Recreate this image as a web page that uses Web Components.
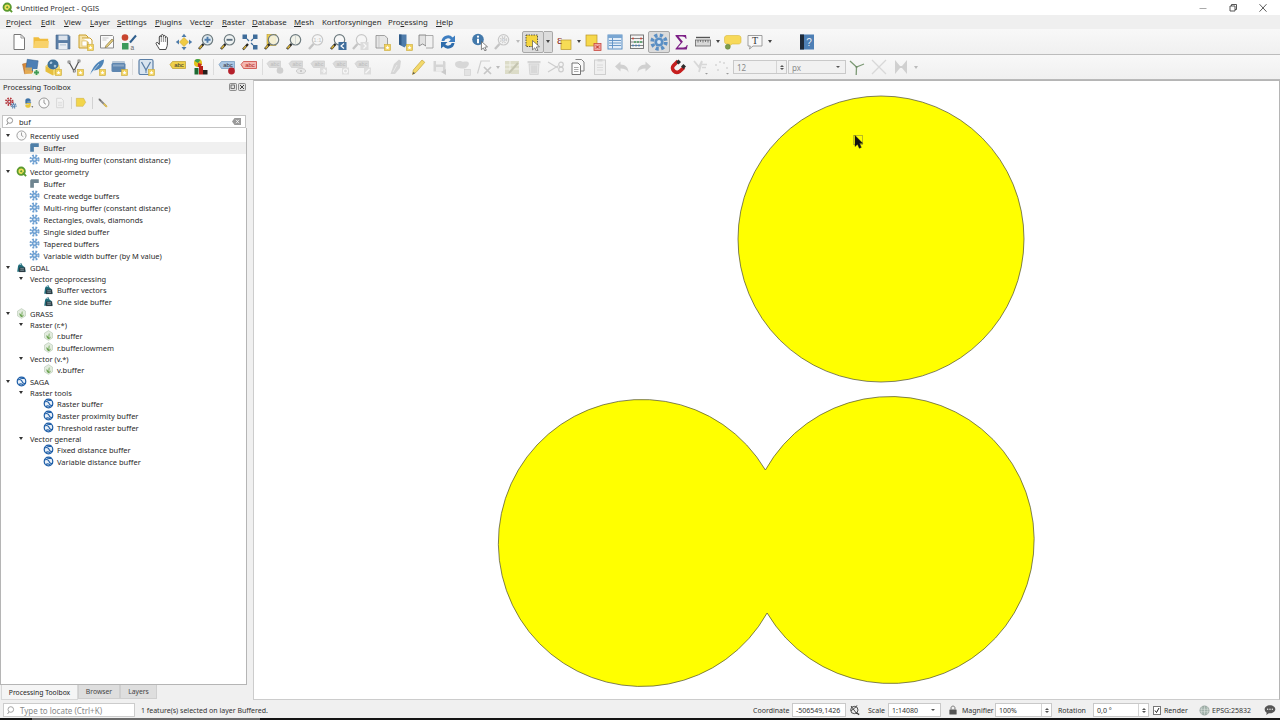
<!DOCTYPE html>
<html lang="en">

<head>
  <meta charset="UTF-8">
  <title>*Untitled Project - QGIS</title>
  <style>
    html, body {
      margin: 0;
      width: 1280px;
      height: 720px;
      overflow: hidden;
      background: #f0f0f0;
      color: #222;
      font-family: "Noto Sans", "Liberation Sans", sans-serif;
      font-size: 8px;
    }
    body { display: flex; flex-direction: column; }
    .main { flex: 1; display: flex; min-height: 0; }
  </style>
</head>

<body>
  <qg-titlebar></qg-titlebar>
  <qg-menubar></qg-menubar>

  <qg-toolbar style="--pad:8px;height:26px">
    <qg-tool name="newdoc"></qg-tool><qg-tool name="open"></qg-tool><qg-tool name="save"></qg-tool><qg-tool name="saveas"></qg-tool><qg-tool name="layout"></qg-tool><qg-tool name="styles"></qg-tool>
    <qg-grip w="11"></qg-grip>
    <qg-tool name="pan"></qg-tool><qg-tool name="panto"></qg-tool><qg-tool name="zoomin"></qg-tool><qg-tool name="zoomout"></qg-tool><qg-tool name="zoomfull"></qg-tool><qg-tool name="zoomlayer"></qg-tool><qg-tool name="zoomsel"></qg-tool><qg-tool name="native" off></qg-tool><qg-tool name="zoomlast"></qg-tool><qg-tool name="zoomnext" off></qg-tool><qg-tool name="newmap"></qg-tool><qg-tool name="newmark"></qg-tool><qg-tool name="showmark"></qg-tool><qg-tool name="refresh"></qg-tool>
    <qg-grip w="10"></qg-grip>
    <qg-tool name="identify"></qg-tool><qg-tool name="lensgear" off></qg-tool><qg-drop w="9" off></qg-drop>
    <qg-tool name="select" on></qg-tool><qg-drop w="9" on></qg-drop>
    <qg-tool name="expr"></qg-tool><qg-drop w="7"></qg-drop>
    <qg-tool name="deselect"></qg-tool><qg-tool name="table"></qg-tool><qg-tool name="abacus"></qg-tool><qg-tool name="gear" on></qg-tool><qg-tool name="sigma"></qg-tool><qg-tool name="ruler"></qg-tool><qg-drop w="8"></qg-drop>
    <qg-tool name="tip"></qg-tool><qg-tool name="annot"></qg-tool><qg-drop w="8"></qg-drop>
    <qg-grip w="22"></qg-grip>
    <qg-tool name="help"></qg-tool>
  </qg-toolbar>

  <qg-toolbar style="--pad:20px;height:25px;--line:#b9b9b9">
    <qg-tool name="dsm"></qg-tool><qg-tool name="gpkg"></qg-tool><qg-tool name="vstar"></qg-tool><qg-tool name="feather"></qg-tool><qg-tool name="virtual"></qg-tool>
    <qg-grip w="5" sep></qg-grip>
    <qg-tool name="vframe"></qg-tool>
    <qg-grip w="10"></qg-grip>
    <qg-tool name="label"></qg-tool><qg-tool name="pies"></qg-tool>
    <qg-grip w="5" sep></qg-grip>
    <qg-tool name="labelpin"></qg-tool><qg-tool name="labelred"></qg-tool>
    <qg-grip w="4" sep></qg-grip>
    <qg-tool name="lab1" off></qg-tool><qg-tool name="lab2" off></qg-tool><qg-tool name="lab3" off></qg-tool><qg-tool name="lab4" off></qg-tool><qg-tool name="lab5" off></qg-tool>
    <qg-grip w="11"></qg-grip>
    <qg-tool name="pencilgrey" off></qg-tool><qg-tool name="pencil"></qg-tool><qg-tool name="saveedit" off></qg-tool><qg-tool name="blob" off></qg-tool><qg-tool name="editx" off></qg-tool><qg-drop w="6" off></qg-drop>
    <qg-tool name="tablepen" off></qg-tool><qg-tool name="trash" off></qg-tool><qg-tool name="scissors" off></qg-tool><qg-tool name="copy"></qg-tool><qg-tool name="paste" off></qg-tool><qg-tool name="undo" off></qg-tool><qg-tool name="redo" off></qg-tool>
    <qg-grip w="12"></qg-grip>
    <qg-tool name="magnet"></qg-tool><qg-tool name="node" off></qg-tool><qg-tool name="dots" off></qg-tool>
    <qg-field w="54" value="12" spin off></qg-field>
    <qg-field w="58" value="px" drop off style="margin-left:1px"></qg-field>
    <qg-tool name="ysplit"></qg-tool><qg-tool name="xgrey" off></qg-tool><qg-tool name="xsolid" off></qg-tool><qg-drop w="7" off></qg-drop>
  </qg-toolbar>

  <div class="main">
    <qg-toolbox>
      <qg-row depth="0" open icon="clock" label="Recently used"></qg-row>
      <qg-row depth="1" icon="buffer" label="Buffer" hot></qg-row>
      <qg-row depth="1" icon="algo" label="Multi-ring buffer (constant distance)"></qg-row>
      <qg-row depth="0" open icon="qgis" label="Vector geometry"></qg-row>
      <qg-row depth="1" icon="buffer2" label="Buffer"></qg-row>
      <qg-row depth="1" icon="algo" label="Create wedge buffers"></qg-row>
      <qg-row depth="1" icon="algo" label="Multi-ring buffer (constant distance)"></qg-row>
      <qg-row depth="1" icon="algo" label="Rectangles, ovals, diamonds"></qg-row>
      <qg-row depth="1" icon="algo" label="Single sided buffer"></qg-row>
      <qg-row depth="1" icon="algo" label="Tapered buffers"></qg-row>
      <qg-row depth="1" icon="algo" label="Variable width buffer (by M value)"></qg-row>
      <qg-row depth="0" open icon="gdal" label="GDAL"></qg-row>
      <qg-row depth="1" open label="Vector geoprocessing"></qg-row>
      <qg-row depth="2" icon="gdal" label="Buffer vectors"></qg-row>
      <qg-row depth="2" icon="gdal" label="One side buffer"></qg-row>
      <qg-row depth="0" open icon="grass" label="GRASS"></qg-row>
      <qg-row depth="1" open label="Raster (r.*)"></qg-row>
      <qg-row depth="2" icon="grass" label="r.buffer"></qg-row>
      <qg-row depth="2" icon="grass" label="r.buffer.lowmem"></qg-row>
      <qg-row depth="1" open label="Vector (v.*)"></qg-row>
      <qg-row depth="2" icon="grass" label="v.buffer"></qg-row>
      <qg-row depth="0" open icon="saga" label="SAGA"></qg-row>
      <qg-row depth="1" open label="Raster tools"></qg-row>
      <qg-row depth="2" icon="saga" label="Raster buffer"></qg-row>
      <qg-row depth="2" icon="saga" label="Raster proximity buffer"></qg-row>
      <qg-row depth="2" icon="saga" label="Threshold raster buffer"></qg-row>
      <qg-row depth="1" open label="Vector general"></qg-row>
      <qg-row depth="2" icon="saga" label="Fixed distance buffer"></qg-row>
      <qg-row depth="2" icon="saga" label="Variable distance buffer"></qg-row>
    </qg-toolbox>
    <qg-map></qg-map>
  </div>

  <qg-statusbar></qg-statusbar>

  <script>
    // small pieces the toolbar icons share
    const badge = '<rect x="11.5" y="11.5" width="6" height="6" fill="#f3d35f" stroke="#c8a838" stroke-width=".6"/><path d="M14.5 12.5l.6 1.4 1.4.1-1.1 1 .4 1.5-1.3-.8-1.3.8.4-1.5-1.1-1 1.4-.1z" fill="#fff"/>';
    const gearAt = (x, y, r, c) => `<circle cx="${x}" cy="${y}" r="${r}" fill="none" stroke="${c}" stroke-width="${r * .55}" stroke-dasharray="${r * .45} ${r * .35}"/><circle cx="${x}" cy="${y}" r="${r * .68}" fill="${c}"/><circle cx="${x}" cy="${y}" r="${r * .28}" fill="#dfeaf6"/>`;
    const lens = (inner = '', fill = '#f1f5f4') => `<path d="M6.5 11L2 16" stroke="#222" stroke-width="2.6"/><path d="M5 12.5L2.5 15.5" stroke="#d8b23a" stroke-width="1.6"/><circle cx="10.5" cy="6.8" r="5.2" fill="${fill}" stroke="#6f7c80" stroke-width="1.2"/>${inner}`;
    const pale = (inner = '') => `<path d="M6.5 11L2 16" stroke="#c4c4c4" stroke-width="2.4"/><circle cx="10.5" cy="6.8" r="5.2" fill="#f6f6f6" stroke="#c8c8c8" stroke-width="1.2"/>${inner}`;
    const abc = (f, s, c) => `<path d="M1 6.5L3.5 3.5H16.5V10.5H3.5z" fill="${f}" stroke="${s}" stroke-width=".7"/><text x="10" y="9.2" font-size="6" font-family="Liberation Sans" text-anchor="middle" fill="${c}">abc</text>`;
    const greyAbc = extra => `<path d="M1 5.5L3.5 3H14.5V9.5H3.5z" fill="#dadada" stroke="#cfcfcf" stroke-width=".7"/><text x="9" y="8" font-size="5.5" font-family="Liberation Sans" text-anchor="middle" fill="#bbb">abc</text>${extra}`;

    const ICONS = {
      newdoc: '<path d="M4 1.5h7l3.5 3.5v11.5H4z" fill="#fff" stroke="#777"/><path d="M11 1.5V5h3.5" fill="none" stroke="#999"/>',
      open: '<path d="M1.5 15V4.2h5l1.5 1.6h8.2V15z" fill="#f0bd3e"/><path d="M1.5 15l1.4-7h14L16 15z" fill="#f8d26a"/>',
      save: '<path d="M2 2h12.5L16 3.5V16H2z" fill="#5a7ea6" stroke="#47658a" stroke-width=".6"/><rect x="4.5" y="2.5" width="9" height="4.6" fill="#dce3ec"/><rect x="4.5" y="10" width="9" height="6" fill="#e9eef4"/><rect x="6" y="11.5" width="6" height=".8" fill="#9fb3c9"/>',
      saveas: '<path d="M3 2h7l2 2v11H3z" fill="#f5e2a8" stroke="#c99e2b"/><path d="M6 5h8l2 2v4" fill="#fff" stroke="#c99e2b"/><rect x="6" y="8" width="5" height="5" fill="#fff" stroke="#d7b65a" stroke-width=".6"/>' + badge,
      layout: '<path d="M2.5 2.5h12l1 1v11.5h-13z" fill="#fafafa" stroke="#8b8b8b"/><path d="M4.5 5h6M4.5 7h4" stroke="#bbb" stroke-width=".8"/><path d="M14 6l-6 6.5-1 2.2 2.3-.8 6-6.4z" fill="#e5cd7c" stroke="#7a6b3a" stroke-width=".6"/>',
      styles: '<circle cx="5" cy="4.5" r="3.3" fill="#c8452f"/><rect x="2" y="10" width="6.5" height="6.5" fill="#3c9a5b"/><path d="M10 9.5L16 2.5" stroke="#2f5f8e" stroke-width="2"/><text x="10.5" y="16.5" font-size="6.5" font-family="Liberation Sans" fill="#666">a</text>',
      pan: '<g transform="translate(1 0)"><path d="M5.5 16.5c-.7-1.6-3-4.6-3.4-5.8-.4-1.2 1-1.8 1.9-.8l1.3 1.6V4c0-1.5 2-1.5 2 0V2.6c0-1.5 2.1-1.5 2.1 0V3.5c0-1.4 2-1.4 2 0v1.2c0-1.2 2-1.2 2 .2v6c0 2.3-.8 3.4-1.5 5.6z" fill="#fff" stroke="#333" stroke-width=".9"/><path d="M7.3 4v5M9.4 3.5V9M11.4 4.5V9" stroke="#444" stroke-width=".6"/></g>',
      panto: '<path d="M9 4.5L13.5 9 9 13.5 4.5 9z" fill="#f0cb45" stroke="#c7a42f" stroke-width=".6"/><path d="M9 .8L11.5 4h-5zM9 17.2L6.5 14h5zM.8 9L4 6.5v5zM17.2 9L14 11.5v-5z" fill="#4f7cab"/>',
      zoomin: lens('<path d="M10.5 3.8v6M7.5 6.8h6" stroke="#4f7cab" stroke-width="1.9"/>', '#dfe9ee'),
      zoomout: lens('<path d="M7.5 6.8h6" stroke="#5c6f7e" stroke-width="1.9"/>', '#eef2f2'),
      zoomfull: '<rect x="1.5" y="1.5" width="4.5" height="4.5" fill="#3f6d9b"/><rect x="12" y="1.5" width="4.5" height="4.5" fill="#3f6d9b"/><rect x="12" y="12" width="4.5" height="4.5" fill="#3f6d9b"/><path d="M6 6l2 2M12 6l-2 2M12 12l-2-2" stroke="#3f6d9b" stroke-width="1.2"/><path d="M7 11L2 16.5" stroke="#222" stroke-width="2.2"/><path d="M5 13l-2.5 3" stroke="#d8b23a" stroke-width="1.3"/>',
      zoomlayer: '<rect x="4" y="1.5" width="9" height="11" fill="#f0cf4d" stroke="#b99a2e" stroke-width=".6"/>' + lens('', 'rgba(245,245,235,.85)'),
      zoomsel: lens('<path d="M10.5 2v9.5" stroke="#c9cfcf" stroke-width=".8"/>', '#f2f3ea'),
      native: pale('<text x="10.5" y="9" font-size="6" font-family="Liberation Sans" text-anchor="middle" fill="#c4c4c4">1:1</text>'),
      zoomlast: lens('', '#f8f8f8') + '<rect x="9.5" y="9" width="8" height="8" fill="#3f6d9b"/><path d="M15 10.5L12 13l3 2.5" fill="none" stroke="#fff" stroke-width="1.2"/>',
      zoomnext: pale('<rect x="9.5" y="9" width="8" height="8" fill="#dcdcdc"/><path d="M12.5 10.5L15 13l-2.5 2.5" fill="none" stroke="#f8f8f8" stroke-width="1.2"/>'),
      newmap: '<path d="M3 2.5h8.5l3 2.5v10H3z" fill="#e6e6e6" stroke="#8c8c8c" stroke-width=".8"/><path d="M6 2.5V15" stroke="#bbb" stroke-width=".7"/>' + badge,
      newmark: '<path d="M4 1.5h7.5V12l-2 2.5-5.500-3z" fill="#4f7cab"/><path d="M4 1.5h2.500v11L4 11.5z" fill="#2f5a88"/>' + badge,
      showmark: '<path d="M2 2h7v11l-3.500-2L2 13z" fill="#e2e2e2" stroke="#777" stroke-width=".8"/><path d="M9 2.500h7V15H9" fill="#f1f1f1" stroke="#999" stroke-width=".8"/>',
      refresh: '<path d="M2.500 8a6.500 6.500 0 0 1 11.200-3.600L16 2.500V9h-6.500l2.300-2.300A3.800 3.800 0 0 0 5.300 8z" fill="#3f7fc1"/><path d="M15.500 10a6.500 6.500 0 0 1-11.200 3.600L2 15.500V9h6.500l-2.300 2.300a3.800 3.800 0 0 0 6.500-1.300z" fill="#2e6cab"/>',
      identify: '<circle cx="7" cy="6.500" r="5.800" fill="#4379ab"/><circle cx="7" cy="3.700" r="1.100" fill="#fff"/><path d="M6 5.800h2v4.500H6z" fill="#fff"/><path d="M10.500 8.500l6 5.300-2.700.4 1.500 3-1.500.7-1.400-3-2 1.800z" fill="#fff" stroke="#555" stroke-width=".7"/>',
      lensgear: pale(gearAt(10.5, 6.8, 3, '#cfcfcf')),
      select: '<rect x="2" y="2" width="11.500" height="11.500" fill="#f5d53f" stroke="#333" stroke-width=".8" stroke-dasharray="1.500 1"/><path d="M8.500 7.500l7 6.200-3.200.4 1.700 3.300-1.500.7-1.700-3.300-2.300 2.100z" fill="#fff" stroke="#555" stroke-width=".7"/>',
      expr: '<rect x="6" y="7" width="10" height="9.500" fill="#f7dc55" stroke="#b7952c" stroke-width=".7"/><text x="2" y="11" font-size="12" font-family="Liberation Serif" fill="#8e2b20">ε</text>',
      deselect: '<rect x="2" y="2" width="11" height="11" fill="#f6d84b" stroke="#b7952c" stroke-width=".7"/><rect x="10" y="10.500" width="7" height="7" fill="#eea6a0" stroke="#c9483f" stroke-width=".8"/><path d="M12 12.500l3 3M15 12.500l-3 3" stroke="#c2261e" stroke-width="1"/>',
      table: '<rect x="2" y="2" width="14" height="14" fill="#e4eef8" stroke="#5b8fc4"/><rect x="2" y="2" width="14" height="3" fill="#7aa6d2"/><path d="M3 7.500h12M3 10h12M3 12.500h12M6.500 5v10.500" stroke="#5b8fc4" stroke-width=".9"/>',
      abacus: '<rect x="2.500" y="2" width="13" height="13.500" fill="#f4f4f4" stroke="#6b6b6b" stroke-width=".9"/><path d="M2.500 5.500h13M2.500 9h13M2.500 12.500h13" stroke="#666" stroke-width=".8"/><g fill="#c44a3b"><circle cx="5" cy="5.500" r="1"/><circle cx="13" cy="5.500" r="1"/></g><g fill="#4c9e62"><circle cx="7" cy="9" r="1"/><circle cx="10" cy="9" r="1"/><circle cx="13" cy="9" r="1"/></g><g fill="#4f7cab"><circle cx="5" cy="12.500" r="1"/><circle cx="8" cy="12.500" r="1"/><circle cx="11" cy="12.500" r="1"/></g>',
      gear: gearAt(9, 9, 6.8, '#5b8fc4'),
      sigma: '<path d="M3.500 2h10.500l.6 3.800h-.9c-.5-1.500-1.300-2.300-3.500-2.300H6.500l4.400 5.300-5 5.800h5.300c2 0 3-.7 3.600-2.500h.9l-.9 4.400H3.500v-.8l5.200-6.200-5.200-6.600z" fill="#7d1f86"/>',
      ruler: '<path d="M2 4.500h14" stroke="#555" stroke-width="1.400"/><rect x="1.500" y="7" width="15" height="6" fill="#d8d8d8" stroke="#666" stroke-width=".8"/><path d="M4 7v2.500M6.500 7v2M9 7v2.500M11.500 7v2M14 7v2.500" stroke="#555" stroke-width=".7"/>',
      tip: '<path d="M3 2.500h11.500c1.500 0 2.500 1 2.500 2.500v3.500c0 1.500-1 2.500-2.500 2.500H8l-3 2.500.5-2.500H3c-1.500 0-2.500-1-2.500-2.500V5c0-1.500 1-2.500 2.500-2.500z" fill="#f7d959" stroke="#d8b83d" stroke-width=".6"/><circle cx="3.800" cy="13.800" r="2.500" fill="#7c9c4a" stroke="#5a7a30" stroke-width=".5"/>',
      annot: '<path d="M2 2.500h14V13H7l-3.500 3 .8-3H2z" fill="#f8f8f8" stroke="#888" stroke-width=".8"/><text x="9" y="11" font-size="10" font-family="Liberation Serif" text-anchor="middle" fill="#333">T</text>',
      help: '<rect x="2" y="1.500" width="14" height="15" fill="#4d7fb5"/><rect x="2" y="1.500" width="4" height="15" fill="#1f2a38"/><text x="11" y="12.500" font-size="10" font-family="Liberation Sans" text-anchor="middle" fill="#e8eef5">?</text>',
      dsm: '<rect x="1.500" y="5" width="10" height="10" transform="rotate(-12 6 10)" fill="#d98a3a" stroke="#a9651f" stroke-width=".5"/><rect x="4.500" y="2" width="11" height="10.500" transform="rotate(8 10 7)" fill="#4c7fb5" stroke="#37618c" stroke-width=".5"/><rect x="3" y="9.500" width="7" height="6.500" fill="#e8b45b" opacity=".8"/><rect x="11" y="11" width="7" height="7" fill="#e9f2e4"/><path d="M14.500 12v5M12 14.500h5" stroke="#3f9b54" stroke-width="1.800"/>',
      gpkg: '<path d="M1.500 8l7.500 4v5.500l-7.500-4z" fill="#e6bf3e"/><path d="M9 12l7-3.500v5.500L9 17.500z" fill="#f3d769"/><path d="M1.500 8L9 3l7 5-7 4z" fill="#f0ce55"/><ellipse cx="9" cy="6.500" rx="5.500" ry="5" fill="#3f7198"/><path d="M6 4c2-1.500 3 .5 2 1.500S5 6.500 6 4zM10 7c2-.5 3 .5 2 2s-3 0-2-2z" fill="#a9c6dc"/>' + badge,
      vstar: '<path d="M3 4l5 9 5-10" fill="none" stroke="#555" stroke-width="1.200"/><rect x="2" y="3" width="2" height="2" fill="#fff" stroke="#444" stroke-width=".6"/><rect x="12" y="2" width="2" height="2" fill="#fff" stroke="#444" stroke-width=".6"/><rect x="7.200" y="12" width="2" height="2" fill="#fff" stroke="#444" stroke-width=".6"/>' + badge,
      feather: '<path d="M2 16.500C5 9 9 3 16 1.500c0 5-3 9-7 10.500l-3.500.6z" fill="#4f85b8"/><path d="M2 16.500L11 6" stroke="#dce8f2" stroke-width=".7"/>' + badge,
      virtual: '<rect x="2" y="3" width="13" height="3" rx="1" fill="#b8c7d6"/><rect x="1.500" y="5" width="14" height="9" rx="1.500" fill="#5e86b0"/><rect x="3" y="6.500" width="11" height="2" fill="#8aa7c5"/>' + badge,
      vframe: '<rect x="2" y="1.500" width="14" height="15" rx="1.500" fill="#d8e4ef" stroke="#5b7fa6" stroke-width="1.200"/><path d="M4.500 4l4.500 8 4.500-8" fill="none" stroke="#5b7fa6" stroke-width="1.300"/><path d="M9 12v3" stroke="#5b7fa6"/>' + badge,
      label: abc('#efd04a', '#b99a2e', '#333'),
      pies: '<circle cx="7" cy="5" r="4" fill="#e3c21b"/><path d="M7 5L3.500 3a4 4 0 0 1 6-1z" fill="#3fa14f"/><path d="M7 5l3.800 1a4 4 0 0 1-4 3z" fill="#c42a20"/><rect x="8" y="8" width="4" height="8.500" fill="#b7211b"/><rect x="3.500" y="10" width="4" height="6.500" fill="#1c6a32"/><rect x="12" y="12" width="4.500" height="4.500" fill="#23201c"/>',
      labelpin: abc('#a9c6e3', '#6f95bb', '#334') + '<circle cx="13.500" cy="13" r="3.400" fill="#b5202b"/>',
      labelred: abc('#f3b6b0', '#c5302a', '#b3231d'),
      lab1: greyAbc('<circle cx="14" cy="12.500" r="3.300" fill="#cfcfcf"/>'),
      lab2: greyAbc('<ellipse cx="13" cy="13" rx="4.500" ry="2.500" fill="#e8e8e8" stroke="#bdbdbd" stroke-width=".7"/><circle cx="13" cy="13" r="1.100" fill="#c0c0c0"/>'),
      lab3: greyAbc('<rect x="10" y="9.500" width="7" height="7" fill="#ddd"/><path d="M11.500 13h3M13.500 11l2 2-2 2" fill="none" stroke="#f8f8f8" stroke-width="1.100"/>'),
      lab4: greyAbc('<rect x="10" y="9.500" width="7" height="7" fill="#ddd"/><circle cx="13.500" cy="13" r="2" fill="none" stroke="#f8f8f8" stroke-width="1.100"/>'),
      lab5: greyAbc('<rect x="10" y="9.500" width="7" height="7" fill="#ddd"/><path d="M11.500 15l4-4" stroke="#f8f8f8" stroke-width="1.200"/>'),
      pencilgrey: '<path d="M3.500 16L7 6l5-4.500 2 1.500-1 7-5 6z" fill="#d6d6d6"/><path d="M6 14l4-7" stroke="#f2f2f2" stroke-width=".7"/>',
      pencil: '<path d="M3.500 16.500l.8-4.500L13 2l2.800 2.300-8.700 10z" fill="#f3d96b" stroke="#c4a63d" stroke-width=".7"/><path d="M3.500 16.500l.8-2.500 1.800 1.300z" fill="#555"/>',
      saveedit: '<path d="M2.500 3h11l1 1v9.500h-12z" fill="#d5d5d5"/><rect x="5" y="3" width="7" height="3.500" fill="#f2f2f2"/><rect x="5" y="9" width="7" height="4.500" fill="#ececec"/><path d="M10 14l5-3v6z" fill="#cacaca"/>',
      blob: '<path d="M2 6c0-3 5-3.500 7-2.500s5-1 6.500 1S14 10 11 10.500 2 10 2 6z" fill="#d7d7d7"/><rect x="11.500" y="11.500" width="6" height="6" fill="#e3e3e3" stroke="#cdcdcd" stroke-width=".6"/>',
      editx: '<path d="M2.500 15.500L6 3h9" fill="none" stroke="#cfcfcf" stroke-width="1.200"/><path d="M9 9l7 7M16 9l-7 7" stroke="#c6c6c6" stroke-width="1.700"/>',
      tablepen: '<rect x="2" y="3" width="14" height="13" fill="#dcdcc8"/><path d="M2 7h14M2 11h14M7 3v13" stroke="#f3f3ec" stroke-width=".9"/><path d="M6 15L15 5" stroke="#c4c4b0" stroke-width="2"/>',
      trash: '<rect x="2.500" y="3" width="13" height="2.300" fill="#d5d5d5"/><path d="M4 6h10l-.8 10.500H4.800z" fill="#e3e3e3" stroke="#cdcdcd" stroke-width=".7"/><path d="M7 7.500V15M9 7.500V15M11 7.500V15" stroke="#c9c9c9" stroke-width=".8"/>',
      scissors: '<path d="M1 4l10 6M1 14l10-6" stroke="#cdcdcd" stroke-width="1.200"/><circle cx="14" cy="6.500" r="2.300" fill="none" stroke="#cdcdcd" stroke-width="1.200"/><circle cx="14" cy="11.500" r="2.300" fill="none" stroke="#cdcdcd" stroke-width="1.200"/>',
      copy: '<path d="M6.500 1.500h6l2.500 2.500v9h-3" fill="#f7f7f7" stroke="#777" stroke-width=".9"/><path d="M3 5h6l2.500 2.500v9H3z" fill="#fcfcfc" stroke="#666" stroke-width=".9"/><path d="M5 9.500h4.500M5 11.500h4.500M5 13.500h4.500" stroke="#888" stroke-width=".7"/>',
      paste: '<rect x="3.500" y="2" width="11" height="14.500" fill="#efefef" stroke="#cfcfcf"/><rect x="6.500" y="1" width="5" height="2.500" fill="#d5d5d5"/><path d="M6 7h6M6 9.500h6M6 12h6" stroke="#d5d5d5" stroke-width=".8"/>',
      undo: '<path d="M2 8.500L7.500 3.500v3c5 0 8 3 8 8-1.500-3-4-4-8-4v3z" fill="#d0d0d0"/>',
      redo: '<path d="M16 8.500L10.500 3.500v3c-5 0-8 3-8 8 1.500-3 4-4 8-4v3z" fill="#d0d0d0"/>',
      magnet: '<path d="M9 3L4.500 7.500C1.500 10.500 6 16.500 10.500 13.500L15 9.500" fill="none" stroke="#c61f1f" stroke-width="3.600"/><path d="M9.500 1.500L7 4l2.500 2.500L12 4zM17 8.500l-2.500-2.500L12 8.500l2.500 2.500z" fill="#2e2e2e"/>',
      node: '<path d="M3 3l5 6 3-6M11 3l-3 11" fill="none" stroke="#d8d8d8" stroke-width="1.800"/><path d="M11 6.500h5M11 9.500h4" stroke="#d8d8d8" stroke-width="1.500"/><path d="M14 15h3l-1.500 1.500z" fill="#999"/>',
      dots: '<g fill="#d6d6d6"><circle cx="3" cy="7" r="1"/><circle cx="7" cy="4" r="1"/><circle cx="11" cy="5" r="1"/><circle cx="14" cy="10" r="1"/><circle cx="5" cy="12" r="1"/></g><path d="M13 15h3l-1.500 1.500z" fill="#999"/>',
      ysplit: '<path d="M2 3l6.500 6L16 6M8.500 9l-.3 8" fill="none" stroke="#7d9a76" stroke-width="1.300"/><circle cx="8.500" cy="9" r="1" fill="#6d8a66"/>',
      xgrey: '<path d="M2 2l14 14M16 2L2 16" stroke="#d8d8d8" stroke-width="1.300"/>',
      xsolid: '<path d="M3 2l5 6h2l5-6v14l-5-6H8l-5 6z" fill="#d0d0d0"/>',
      // tree icons
      clock: '<circle cx="9" cy="9" r="7.500" fill="#fafafa" stroke="#8a8a8a" stroke-width="1.300"/><path d="M9 4v5l3 2" fill="none" stroke="#8a8a8a" stroke-width="1.300"/>',
      buffer: '<path d="M2 16V5c0-2 1-3 3-3h11v6H8v8z" fill="#4f7fa8"/>',
      buffer2: '<path d="M2 16V5c0-2 1-3 3-3h11v6H8v8z" fill="#6f8590"/>',
      algo: gearAt(9, 9, 6.5, '#6ea0d2'),
      qgis: '<circle cx="8.500" cy="8.500" r="6" fill="#f1e15a" stroke="#5a9a2f" stroke-width="3"/><path d="M11 11l5.500 5.500" stroke="#5a9a2f" stroke-width="3"/><rect x="7" y="7" width="3" height="3" fill="#5a9a2f" transform="rotate(45 8.500 8.500)"/>',
      gdal: '<path d="M3 9c0-3 2-7 6-7 1.500 3 1 4 5 6l2 8H2z" fill="#1f6b78"/><rect x="5" y="9" width="10" height="7.500" fill="#2c3c44"/><path d="M7 11h6M7 13.500h6" stroke="#a9c6cc" stroke-width="1"/><path d="M4 4l4-1.500 1 3z" fill="#9ccbd6"/>',
      grass: '<path d="M9 1l6.500 4v8L9 17l-6.500-4V5z" fill="#e3ecdf" stroke="#a9bda4" stroke-width=".8"/><path d="M9 15c-3-2-4-5-3-7 1 1 2 2 3 4 0-3 0-5 1-7 1 2 1 5-.5 8 1-1 2-2 3-2.500 0 2-1 4-3.500 4.500z" fill="#6da452"/>',
      saga: '<circle cx="9" cy="9" r="7" fill="#e9f0f8" stroke="#1f5fa8" stroke-width="2"/><path d="M2.500 6.500C6 5 9 6 10 9s3.500 4 6 2.500M4.500 14c3-2 5-2 8 1M6 3c2 1 5 1 8 .5" fill="none" stroke="#1f5fa8" stroke-width="1.800"/>',
      // status bar and panel bar
      pgears: gearAt(6.5, 7, 5, '#b3353b') + gearAt(13, 13, 3.5, '#4f7cab'),
      python: '<path d="M5 9V5c0-2 2-3 4-3s4 1 4 3v2H8v1h6c-1 2-2 3-4 3H6z" fill="#3f73a6"/><path d="M13 9v4c0 2-2 3-4 3s-4-1-4-3v-1h5v-1H4c1-1 3-2 5-2z" fill="#e8c63a"/><path d="M14 14h3l-1.500 2z" fill="#555"/>',
      pagegrey: '<path d="M4 2h7l3 3v11H4z" fill="#f4f4f4" stroke="#c8c8c8"/><path d="M6 8h6M6 10.500h6M6 13h6" stroke="#d0d0d0" stroke-width=".9"/>',
      tagyellow: '<path d="M2 2h11l3 6-4 6H2z" fill="#f2d54b" stroke="#c9a93a" stroke-width=".7"/>',
      wrench: '<path d="M3 3l11 11" stroke="#888" stroke-width="3"/><path d="M2 2l4 3-1 1z" fill="#555"/><path d="M10 10l5 5" stroke="#e2c255" stroke-width="2.500"/>',
      mouse: '<circle cx="8" cy="9" r="5.500" fill="#eee" stroke="#333" stroke-width="1.300"/><path d="M3 3l9 12M12 2c-2 3-4 5-9 8" fill="none" stroke="#333" stroke-width="1.300"/><path d="M10 12l6 3-2 2z" fill="#333"/>',
      lock: '<rect x="2.500" y="8" width="13" height="9" rx="1" fill="#555"/><path d="M5.500 8V5c0-4 7-4 7 0v3" fill="none" stroke="#777" stroke-width="1.800"/>',
      globe: '<circle cx="9" cy="9" r="7.500" fill="#9fb0a8" stroke="#7d8d88"/><path d="M2 7h14M2 11h14M9 2v14M5 3c-2 4-2 8 0 12M13 3c2 4 2 8 0 12" fill="none" stroke="#e2e8e4" stroke-width=".9"/>',
      bubble: '<path d="M9 2c4.500 0 8 2.500 8 6s-3.500 6-8 6c-.6 0-1.200 0-1.800-.1L3.500 16.500l.5-3.500C2 12 1 10 1 8c0-3.500 3.500-6 8-6z" fill="#555"/><g fill="#f0f0f0"><circle cx="5.500" cy="8" r="1.100"/><circle cx="9" cy="8" r="1.100"/><circle cx="12.500" cy="8" r="1.100"/></g>'
    };

    function iconSvg(name, size) {
      return `<svg width="${size}" height="${size}" viewBox="0 0 18 18" style="display:block">${ICONS[name] || ''}</svg>`;
    }

    class QgIcon extends HTMLElement {
      connectedCallback() {
        const size = this.getAttribute('size') || 11;
        this.attachShadow({ mode: 'open' }).innerHTML = `
          <style>:host { display: inline-block; width: ${size}px; height: ${size}px; flex: none; }</style>
          ${iconSvg(this.getAttribute('name'), size)}`;
      }
    }

    class QgTitlebar extends HTMLElement {
      constructor() {
        super();
        this.attachShadow({ mode: 'open' }).innerHTML = `
          <style>
            :host { display: flex; align-items: center; height: 15px; background: #fff; flex: none; font-size: 7.5px; color: #333; }
            .logo { margin: 0 3px 0 2px; }
            .title { flex: 1; }
            .win { display: flex; margin-right: 2px; }
            .win svg { display: block; width: 30px; height: 14px; }
          </style>
          <qg-icon class="logo" name="qgis" size="11"></qg-icon>
          <span class="title">*Untitled Project - QGIS</span>
          <div class="win">
            <svg viewBox="0 0 30 14"><path d="M11.5 7.5h7" stroke="#aaa"/></svg>
            <svg viewBox="0 0 30 14"><path d="M12 5h5v5h-5zM13.500 5V3.500h5v5H17" fill="none" stroke="#444" stroke-width=".9"/></svg>
            <svg viewBox="0 0 30 14"><path d="M11.500 3.200l7 7.500M18.500 3.200l-7 7.500" stroke="#333" stroke-width=".8"/></svg>
          </div>`;
      }
    }

    class QgMenubar extends HTMLElement {
      constructor() {
        super();
        const items = [['Project', 0, 6], ['Edit', 0, 41], ['View', 0, 64], ['Layer', 0, 90], ['Settings', 0, 117], ['Plugins', 0, 155],
          ['Vector', 4, 190], ['Raster', 0, 222], ['Database', 0, 252], ['Mesh', 0, 294], ['Kortforsyningen', -1, 322], ['Processing', 3, 388], ['Help', 0, 436]];
        let prev = 0;
        const html = items.map(([t, u, x]) => {
          const label = u < 0 ? t : `${t.slice(0, u)}<u>${t[u]}</u>${t.slice(u + 1)}`;
          const w = x - prev;
          prev = x;
          return `<span style="flex:none;margin-left:${w}px;width:0;white-space:nowrap">${label}</span>`;
        }).join('');
        this.attachShadow({ mode: 'open' }).innerHTML = `
          <style>
            :host { display: flex; align-items: center; height: 14px; flex: none; background: #efefef; border-bottom: 1px solid #ddd; box-sizing: content-box; margin-bottom: -1px; position: relative; font-size: 7.800px; color: #2a2a2a; }
            u { text-underline-offset: 1px; text-decoration-thickness: .5px; }
          </style>${html}`;
      }
    }

    class QgToolbar extends HTMLElement {
      constructor() {
        super();
        this.attachShadow({ mode: 'open' }).innerHTML = `
          <style>
            :host { display: flex; align-items: center; flex: none; box-sizing: border-box; padding-left: var(--pad); background: linear-gradient(#f8f8f8, #f0f0f0); border-bottom: 1px solid var(--line, #bcbcbc); position: relative; }
            i { position: absolute; left: 3px; top: 7px; bottom: 7px; width: 2px; background-image: radial-gradient(#c9c9c9 45%, transparent 50%); background-size: 2px 2px; }
          </style><i></i><slot></slot>`;
      }
    }

    class QgTool extends HTMLElement {
      connectedCallback() {
        this.attachShadow({ mode: 'open' }).innerHTML = `
          <style>
            :host { display: flex; align-items: center; justify-content: center; flex: none; width: 22px; height: 22px; box-sizing: border-box; margin: 0; }
            :host([on]) { background: #dcdcdc; border: 1px solid #a8a8a8; border-radius: 2px; }
          </style>
          ${iconSvg(this.getAttribute('name'), 18)}`;
      }
    }

    class QgDrop extends HTMLElement {
      connectedCallback() {
        this.attachShadow({ mode: 'open' }).innerHTML = `
          <style>
            :host { display: flex; align-items: center; justify-content: center; flex: none; width: ${this.getAttribute('w')}px; height: 22px; box-sizing: border-box; }
            :host([on]) { background: #dcdcdc; border: 1px solid #a8a8a8; border-left: 0; border-radius: 0 2px 2px 0; }
            b { width: 0; height: 0; border: 2.5px solid transparent; border-top: 3px solid #444; border-bottom: 0; }
            :host([off]) b { border-top-color: #bbb; }
          </style><b></b>`;
      }
    }

    class QgGrip extends HTMLElement {
      connectedCallback() {
        const w = this.getAttribute('w');
        const sep = this.hasAttribute('sep');
        this.attachShadow({ mode: 'open' }).innerHTML = `
          <style>
            :host { display: flex; justify-content: center; flex: none; width: ${w}px; height: 16px; }
            b { width: ${sep ? 1 : 2}px; height: 100%; ${sep ? 'background:#dcdcdc' : 'background-image:radial-gradient(#cfcfcf 45%, transparent 50%);background-size:2px 2px'}; }
          </style><b></b>`;
      }
    }

    class QgField extends HTMLElement {
      connectedCallback() {
        const spin = this.hasAttribute('spin');
        const drop = this.hasAttribute('drop');
        const arrows = spin
          ? `<span class="s"><em class="u"></em><em class="d"></em></span>`
          : drop ? `<span class="c"><em class="d"></em></span>` : '';
        this.attachShadow({ mode: 'open' }).innerHTML = `
          <style>
            :host { display: flex; align-items: center; flex: none; box-sizing: border-box; width: ${this.getAttribute('w')}px; height: 14px; background: #fff; border: 1px solid #c9c9c9; font-size: var(--fs, 8px); color: #333; }
            :host([off]) { background: #f1f1f1; color: #8a8a8a; }
            span.v { flex: 1; padding-left: 3px; white-space: nowrap; }
            .s, .c { display: flex; flex-direction: column; align-items: center; justify-content: center; gap: 1px; width: 9px; height: 100%; border-left: 1px solid #d4d4d4; }
            .c { border-left: 0; width: 14px; }
            em { width: 0; height: 0; border: 2px solid transparent; }
            em.u { border-bottom: 2.5px solid #555; border-top: 0; }
            em.d { border-top: 2.5px solid #555; border-bottom: 0; }
          </style><span class="v">${this.getAttribute('value')}</span>${arrows}`;
      }
    }

    class QgToolbox extends HTMLElement {
      constructor() {
        super();
        this.attachShadow({ mode: 'open' }).innerHTML = `
          <style>
            :host { display: flex; flex-direction: column; flex: none; width: 248px; margin-right: 5px; font-size: 7.5px; color: #2a2a2a; }
            .head { display: flex; align-items: center; height: 14px; padding-left: 3px; flex: none; }
            .head span { flex: 1; }
            .head svg { display: block; }
            .bar { display: flex; align-items: center; height: 18px; flex: none; padding-left: 3px; }
            .bar b { width: 1px; height: 12px; background: #d2d2d2; flex: none; }
            .search { display: flex; align-items: center; height: 13px; margin: 3px 2px 0; box-sizing: border-box; background: #fff; border: 1px solid #c4c4c4; flex: none; padding: 0 4px 0 3px; gap: 4px; }
            .search span { flex: 1; }
            .tree { flex: 1; margin: 0 1px 0 0; background: #fff; border: 1px solid #b5b5b5; border-top: 0; padding-top: 1.5px; }
            .tabs { display: flex; height: 15px; flex: none; padding-left: 1px; font-size: 6.800px; }
            .tab { display: flex; align-items: center; justify-content: center; height: 14px; background: #dedede; border: 1px solid #cfcfcf; border-top: 0; box-sizing: border-box; color: #444; }
            .tab.on { background: #f5f5f5; height: 15px; color: #222; border-color: #d8d8d8; }
          </style>
          <div class="head">
            <span>Processing Toolbox</span>
            <svg width="8" height="8" viewBox="0 0 8 8" style="margin-right:1px"><rect x=".5" y=".5" width="7" height="7" rx="1" fill="#e2e2e2" stroke="#666" stroke-width=".7"/><rect x="2" y="2" width="3.5" height="3.5" fill="none" stroke="#444" stroke-width=".7"/></svg>
            <svg width="8" height="8" viewBox="0 0 8 8" style="margin-right:2px"><rect x=".5" y=".5" width="7" height="7" rx="1" fill="#e2e2e2" stroke="#666" stroke-width=".7"/><path d="M2 2l4 4M6 2L2 6" stroke="#333" stroke-width=".9"/></svg>
          </div>
          <div class="bar">
            <qg-icon name="pgears" size="12" style="margin-left:2px"></qg-icon>
            <qg-icon name="python" size="12" style="margin-left:5px"></qg-icon>
            <qg-icon name="clock" size="12" style="margin-left:4px"></qg-icon>
            <qg-icon name="pagegrey" size="12" style="margin-left:4px"></qg-icon>
            <b style="margin:0 3px 0 5px"></b>
            <qg-icon name="tagyellow" size="12"></qg-icon>
            <b style="margin:0 4px 0 5px"></b>
            <qg-icon name="wrench" size="12"></qg-icon>
          </div>
          <div class="search">
            <svg width="9" height="9" viewBox="0 0 9 9"><circle cx="3.800" cy="3.500" r="2.800" fill="none" stroke="#888" stroke-width=".9"/><path d="M2 6L.5 8" stroke="#888"/></svg>
            <span>buf</span>
            <svg width="9" height="7" viewBox="0 0 9 7"><path d="M0 3.500L2.500 0H9v7H2.500z" fill="#9a9a9a"/><path d="M4 1.800L7 5.200M7 1.800L4 5.200" stroke="#fff" stroke-width=".8"/></svg>
          </div>
          <div class="tree"><slot></slot></div>
          <div class="tabs">
            <div class="tab on" style="width:77px">Processing Toolbox</div>
            <div class="tab" style="width:42px">Browser</div>
            <div class="tab" style="width:37px">Layers</div>
          </div>`;
      }
    }

    class QgRow extends HTMLElement {
      connectedCallback() {
        const depth = +this.getAttribute('depth');
        const icon = this.getAttribute('icon');
        const pic = icon ? `<qg-icon name="${icon}" size="11" style="margin:0 3.5px 0 1.5px"></qg-icon>` : '';
        this.attachShadow({ mode: 'open' }).innerHTML = `
          <style>
            :host { display: flex; align-items: center; height: ${icon ? 12 : 10}px; padding-left: ${depth * 13.5}px; color: #2a2a2a; font-size: 7.5px; white-space: nowrap; }
            :host([hot]) { background: #f0f0f0; }
            .arrow { display: flex; align-items: center; justify-content: center; width: 13px; flex: none; }
            .arrow b { width: 0; height: 0; border: 2.5px solid transparent; border-top: 3px solid #333; border-bottom: 0; }
            .text { margin-left: ${icon ? 0 : 2.5}px; }
          </style>
          <span class="arrow">${this.hasAttribute('open') ? '<b></b>' : ''}</span>${pic}<span class="text">${this.getAttribute('label')}</span>`;
      }
    }

    class QgMap extends HTMLElement {
      constructor() {
        super();
        this.attachShadow({ mode: 'open' }).innerHTML = `
          <style>
            :host { display: block; flex: 1; position: relative; background: #fff; border: 1px solid #b5b5b5; border-bottom-color: #ccc; border-left-color: #ccc; }
            svg { position: absolute; left: -254px; top: -81px; display: block; }
          </style>
          <svg width="1280" height="720" viewBox="0 0 1280 720">
            <circle cx="881" cy="239" r="143" fill="#ffff00" stroke="#4b4b33" stroke-width=".7"/>
            <path d="M765.4 470 A143.5 143.5 0 1 0 767.1 613 A143.5 143.5 0 1 0 765.4 470Z" fill="#ffff00" stroke="#4b4b33" stroke-width=".7"/>
            <rect x="853.5" y="135.5" width="9" height="9" fill="none" stroke="#555" stroke-width=".8" stroke-dasharray="1 1"/>
            <path d="M855 135.500l0 11 2.500-2.200 1.800 4 2-.9-1.800-3.800 3.200-.3z" fill="#111" stroke="#111" stroke-width=".4"/>
          </svg>`;
      }
    }

    class QgStatusbar extends HTMLElement {
      constructor() {
        super();
        this.attachShadow({ mode: 'open' }).innerHTML = `
          <style>
            :host { display: block; flex: none; font-size: 7px; color: #333; --fs: 7px; }
            .row { display: flex; align-items: center; height: 18px; box-sizing: border-box; padding-top: 2px; background: #f0f0f0; }
            .locate { display: flex; align-items: center; gap: 4px; width: 132px; height: 14px; margin-left: 3px; box-sizing: border-box; background: #fff; border: 1px solid #ccc; padding-left: 3px; color: #8a8a8a; flex: none; font-size: 8px; }
            .msg { margin-left: 6px; flex: 1; white-space: nowrap; }
            .l { flex: none; white-space: nowrap; }
            .check { flex: none; display: block; width: 8px; height: 9px; margin: 0 3px 0 4px; background: #fff; border: 1px solid #777; box-sizing: border-box; }
            .check svg { display: block; }
            .strip { display: flex; height: 2px; }
            .strip i { display: block; }
          </style>
          <div class="row">
            <div class="locate">
              <svg width="9" height="9" viewBox="0 0 9 9"><circle cx="3.800" cy="3.500" r="2.800" fill="none" stroke="#999" stroke-width=".9"/><path d="M2 6L.5 8" stroke="#999"/></svg>
              Type to locate (Ctrl+K)
            </div>
            <span class="msg">1 feature(s) selected on layer Buffered.</span>
            <span class="l" style="width:35px;margin-right:4px">Coordinate</span>
            <qg-field w="54" value="-506549,1426"></qg-field>
            <qg-icon name="mouse" size="12" style="margin:0 7px 0 3px"></qg-icon>
            <span class="l" style="width:16px;margin-right:4px">Scale</span>
            <qg-field w="53" value="1:14080" drop></qg-field>
            <qg-icon name="lock" size="10" style="margin:0 4px 0 7px"></qg-icon>
            <span class="l" style="width:30px;margin-right:3px">Magnifier</span>
            <qg-field w="57" value="100%" spin></qg-field>
            <span class="l" style="width:28px;margin:0 7px 0 6px">Rotation</span>
            <qg-field w="56" value="0,0 °" spin></qg-field>
            <span class="check"><svg width="6" height="7" viewBox="0 0 6 7"><path d="M1 3.500l1.500 2L5 1" fill="none" stroke="#222" stroke-width="1"/></svg></span>
            <span class="l" style="width:24px;margin-right:11px">Render</span>
            <qg-icon name="globe" size="11" style="margin-right:2px"></qg-icon>
            <span class="l" style="width:40px;margin-right:12px">EPSG:25832</span>
            <qg-icon name="bubble" size="12" style="margin-right:4px"></qg-icon>
          </div>
          <div class="strip">
            <i style="width:32px;background:#141414"></i><i style="width:228px;background:#6a6a6a"></i><i style="flex:1;background:#141414"></i>
          </div>`;
      }
    }

    customElements.define('qg-icon', QgIcon);
    customElements.define('qg-titlebar', QgTitlebar);
    customElements.define('qg-menubar', QgMenubar);
    customElements.define('qg-toolbar', QgToolbar);
    customElements.define('qg-tool', QgTool);
    customElements.define('qg-drop', QgDrop);
    customElements.define('qg-grip', QgGrip);
    customElements.define('qg-field', QgField);
    customElements.define('qg-toolbox', QgToolbox);
    customElements.define('qg-row', QgRow);
    customElements.define('qg-map', QgMap);
    customElements.define('qg-statusbar', QgStatusbar);
  </script>

</body>

</html>
